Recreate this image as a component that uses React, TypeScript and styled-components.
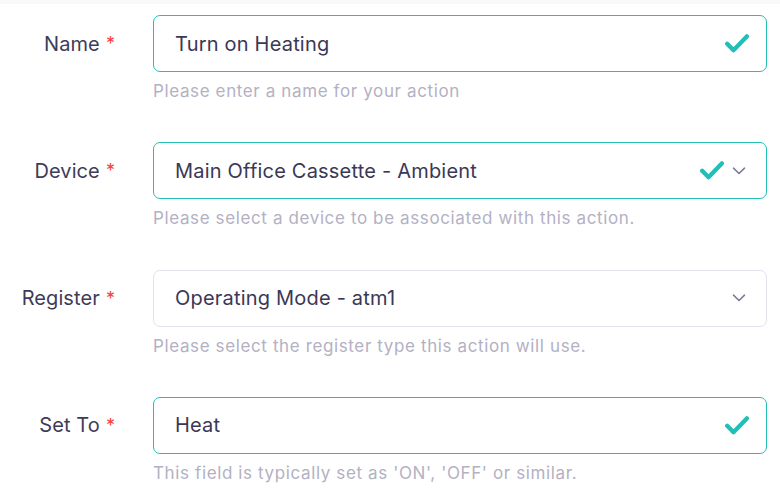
import React from "react";
import styled, { createGlobalStyle } from "styled-components";

const Global = createGlobalStyle`
  html, body { margin: 0; padding: 0; background: #ffffff; }
  body { font-family: Inter, "Noto Sans", Arial, sans-serif; }
`;

const TEAL = "#20c0b6";

const Page = styled.div`
  width: 780px;
  height: 491px;
  box-sizing: border-box;
  background: linear-gradient(#f9f9fa 0, #f9f9fa 4px, #ffffff 4px);
  padding: 15px 13px 0 0;
  display: flex;
  flex-direction: column;
  gap: 40.3px;
  overflow: hidden;
`;

const Row = styled.div`
  display: grid;
  grid-template-columns: 115px 1fr;
  column-gap: 38px;
  align-items: start;
`;

const Label = styled.label`
  height: 57px;
  display: flex;
  align-items: center;
  justify-content: flex-end;
  font-size: 20px;
  letter-spacing: 0.1px;
  color: #3e3c58;
  white-space: nowrap;
`;

const Star = styled.span`
  color: #f5413c;
  margin-left: 6px;
  font-size: 18px;
`;

const Field = styled.div`
  display: flex;
  flex-direction: column;
`;

const Box = styled.div<{ $valid?: boolean; $select?: boolean }>`
  height: 57px;
  box-sizing: border-box;
  border: 1px solid ${(p) => (p.$valid ? TEAL : "#e3e1ee")};
  border-radius: 7px;
  display: flex;
  align-items: center;
  padding: 0 ${(p) => (p.$select ? 20 : 17)}px 0 21px;
  gap: 8px;
`;

const Value = styled.span`
  flex: 1;
  font-size: 20px;
  letter-spacing: 0.2px;
  color: #3a3856;
  white-space: nowrap;
`;

const Help = styled.div`
  margin-top: 8px;
  font-size: 17px;
  letter-spacing: 0.62px;
  line-height: 22px;
  color: #b3b1c3;
  white-space: nowrap;
`;

const Check = () => (
  <svg width="24" height="19" viewBox="0 0 24 19">
    <path
      d="M2.2 9.8 L8.5 16.2 L21.8 2.4"
      fill="none"
      stroke={TEAL}
      strokeWidth="4.3"
      strokeLinecap="round"
      strokeLinejoin="round"
    />
  </svg>
);

const Chevron = () => (
  <svg width="14" height="8" viewBox="0 0 14 8">
    <path
      d="M1.5 1.2 L7 6.5 L12.5 1.2"
      fill="none"
      stroke="#7f7b99"
      strokeWidth="1.6"
      strokeLinecap="round"
      strokeLinejoin="round"
    />
  </svg>
);

type F = {
  label: string;
  value: string;
  help: string;
  valid: boolean;
  select: boolean;
};

const fields: F[] = [
  { label: "Name", value: "Turn on Heating", help: "Please enter a name for your action", valid: true, select: false },
  { label: "Device", value: "Main Office Cassette - Ambient", help: "Please select a device to be associated with this action.", valid: true, select: true },
  { label: "Register", value: "Operating Mode - atm1", help: "Please select the register type this action will use.", valid: false, select: true },
  { label: "Set To", value: "Heat", help: "This field is typically set as 'ON', 'OFF' or similar.", valid: true, select: false },
];

export default function App() {
  return (
    <>
      <Global />
      <Page>
        {fields.map((f) => (
          <Row key={f.label}>
            <Label>
              {f.label}
              <Star>*</Star>
            </Label>
            <Field>
              <Box $valid={f.valid} $select={f.select}>
                <Value>{f.value}</Value>
                {f.valid && <Check />}
                {f.select && <Chevron />}
              </Box>
              <Help>{f.help}</Help>
            </Field>
          </Row>
        ))}
      </Page>
    </>
  );
}
